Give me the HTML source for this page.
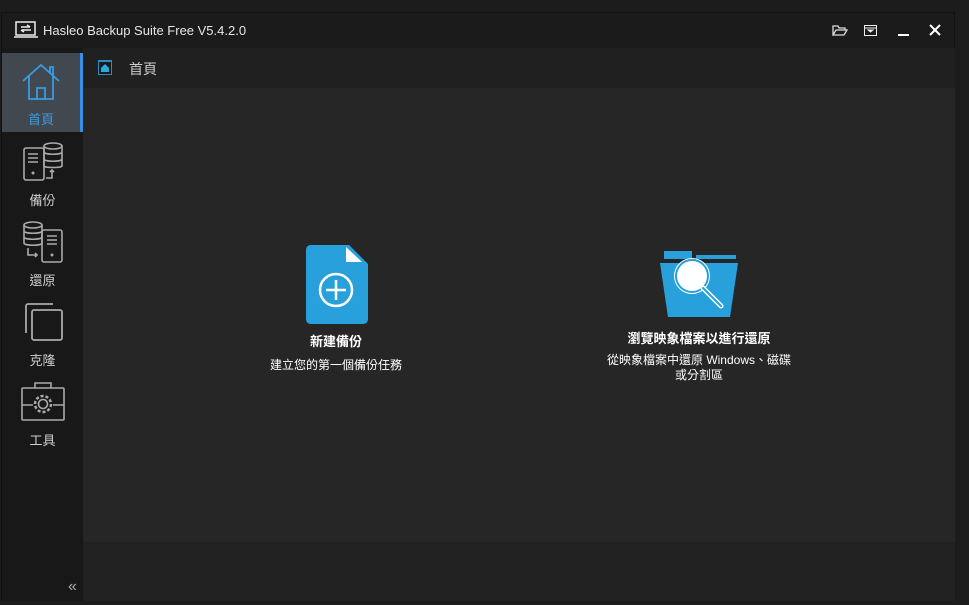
<!DOCTYPE html>
<html><head><meta charset="utf-8"><style>
*{margin:0;padding:0;box-sizing:border-box}
body{width:969px;height:605px;background:#1c1c1c;position:relative;overflow:hidden;font-family:"Liberation Sans","Noto Sans CJK TC",sans-serif;color:#ddd}
.win{position:absolute;left:1px;top:12px;width:954px;height:589px;background:#1a1a1a;border:1px solid #111}
.title{position:absolute;left:0;top:0;width:100%;height:35px;background:#1b1b1b}
.title .t{position:absolute;left:41px;top:10px;font-size:13px;color:#e6e6e6}
.side{position:absolute;left:0;top:35px;width:81px;height:553px;background:#181818}
.item{position:absolute;left:0;width:81px;text-align:center;font-size:13px;color:#d0d0d0}
.act{background:#424850;border-right:3px solid #3a8ee6;color:#3a9be0}
.crumb{position:absolute;left:81px;top:35px;width:872px;height:40px;background:#202020}
.content{position:absolute;left:81px;top:75px;width:872px;height:454px;background:#262626}
.bottom{position:absolute;left:81px;top:529px;width:872px;height:59px;background:#212121}
.cap{position:absolute;text-align:center;color:#fff;font-size:12px}
.cap b{display:block;font-size:13px;margin-bottom:6px}
</style></head><body>
<div class="win">
<div class="title">
<svg style="position:absolute;left:12px;top:8px" width="24" height="18" viewBox="0 0 24 18"><rect x="2" y="1" width="19" height="13" fill="none" stroke="#eee" stroke-width="1.5"/><path d="M0 16h24" stroke="#eee" stroke-width="1.5"/><path d="M7 6h9M13 4l3 2M17 9H8M10 11l-3-2" stroke="#eee" stroke-width="1.5" fill="none"/></svg>
<div class="t">Hasleo Backup Suite Free V5.4.2.0</div>
<svg style="position:absolute;left:830px;top:11px" width="16" height="13" viewBox="0 0 16 13"><path d="M1 11V2h5l1 2h6v2M1 11l3-5h11l-3 5z" fill="none" stroke="#ddd" stroke-width="1.3"/></svg>
<svg style="position:absolute;left:862px;top:12px" width="13" height="11" viewBox="0 0 13 11"><rect x="0.5" y="0.5" width="12" height="10" fill="none" stroke="#eee"/><path d="M0 3h13M4 5h5l-2.5 2z" stroke="#eee" fill="#eee"/></svg>
<div style="position:absolute;left:896px;top:21px;width:11px;height:2px;background:#fff"></div>
<svg style="position:absolute;left:927px;top:11px" width="12" height="12"><path d="M1 1l10 10M11 1L1 11" stroke="#fff" stroke-width="2"/></svg>
</div>
<div class="side">
<div class="item act" style="top:5px;height:79px">
<svg style="margin-top:9px" width="40" height="40" viewBox="0 0 40 40"><path d="M2 19L20 3l18 16M8 14v23h24V14M16 37V26h8v11M29 11V5h3v9" fill="none" stroke="#3a9be0" stroke-width="1.8"/></svg>
<div style="margin-top:4px">首頁</div></div>
<div class="item" style="top:93px;height:70px">
<svg width="42" height="42" viewBox="0 0 42 42"><rect x="2" y="7" width="20" height="32" rx="2" fill="none" stroke="#aaa" stroke-width="1.6"/><path d="M6 13h10M6 17h10M6 21h10" stroke="#aaa" stroke-width="1.6"/><circle cx="11" cy="32" r="1.5" fill="#aaa"/><ellipse cx="31" cy="5" rx="9" ry="3" fill="#181818" stroke="#aaa" stroke-width="1.6"/><path d="M22 5v20c0 2 18 2 18 0V5M22 11c0 3 18 3 18 0M22 18c0 3 18 3 18 0M24 37h6v-7M28 31l2-2 2 2" fill="none" stroke="#aaa" stroke-width="1.6"/></svg>
<div style="margin-top:4px">備份</div></div>
<div class="item" style="top:173px;height:70px">
<svg width="42" height="42" viewBox="0 0 42 42"><rect x="20" y="9" width="20" height="32" rx="2" fill="none" stroke="#aaa" stroke-width="1.6"/><path d="M25 15h10M25 19h10M25 23h10" stroke="#aaa" stroke-width="1.6"/><circle cx="30" cy="34" r="1.5" fill="#aaa"/><ellipse cx="11" cy="4" rx="9" ry="3" fill="none" stroke="#aaa" stroke-width="1.6"/><path d="M2 4v18c0 3 18 3 18 0V4M2 10c0 3 18 3 18 0M2 16c0 3 18 3 18 0M6 27v7h9M13 32l2 2-2 2" fill="none" stroke="#aaa" stroke-width="1.6"/></svg>
<div style="margin-top:4px">還原</div></div>
<div class="item" style="top:253px;height:70px">
<svg width="42" height="42" viewBox="0 0 42 42"><path d="M4 32V5c0-1 1-2 2-2h25" fill="none" stroke="#aaa" stroke-width="1.8"/><rect x="10" y="9" width="30" height="30" rx="2" fill="none" stroke="#aaa" stroke-width="1.8"/></svg>
<div style="margin-top:4px">克隆</div></div>
<div class="item" style="top:333px;height:70px">
<svg width="44" height="42" viewBox="0 0 44 42"><rect x="1" y="7" width="42" height="32" rx="1" fill="none" stroke="#aaa" stroke-width="1.6"/><path d="M14 7V2h16v5M1 24h11M32 24h11" fill="none" stroke="#aaa" stroke-width="1.6"/><circle cx="22" cy="23" r="8" fill="none" stroke="#aaa" stroke-width="2.5" stroke-dasharray="3 2"/><circle cx="22" cy="23" r="4.5" fill="none" stroke="#aaa" stroke-width="1.6"/></svg>
<div style="margin-top:4px">工具</div></div>
<div style="position:absolute;left:66px;top:530px;font-size:16px;color:#aaa">«</div>
</div>
<div class="crumb">
<svg style="position:absolute;left:15px;top:12px" width="14" height="15"><rect x="0.5" y="0.5" width="13" height="14" fill="#1a1a1a" stroke="#2a8fc0"/><rect x="0" y="0" width="14" height="2" fill="#2a8fc0"/><path d="M3 8l4-4 4 4v4H3z" fill="#2aa8e0"/></svg>
<div style="position:absolute;left:46px;top:11px;font-size:14px;color:#ccc">首頁</div>
</div>
<div class="content">
<svg style="position:absolute;left:223px;top:157px" width="63" height="79" viewBox="0 0 63 79"><path d="M5 0h38l19 19v55c0 3-2 5-5 5H5c-3 0-5-2-5-5V5c0-3 2-5 5-5z" fill="#27a0dc"/><path d="M40 2v15h16z" fill="#fff"/><circle cx="30" cy="45" r="16" fill="none" stroke="#fff" stroke-width="2.5"/><path d="M30 35v20M20 45h20" stroke="#fff" stroke-width="2.5"/></svg>
<div class="cap" style="left:148px;top:243px;width:210px"><b>新建備份</b>建立您的第一個備份任務</div>
<svg style="position:absolute;left:577px;top:163px" width="78" height="66" viewBox="0 0 78 66"><path d="M4 0h28v8H4z" fill="#27a0dc"/><path d="M36 4h40v4H36z" fill="#27a0dc"/><path d="M0 12h78l-8 54H8z" fill="#27a0dc"/><circle cx="32" cy="25" r="16" fill="#fff" stroke="#27a0dc" stroke-width="2"/><circle cx="32" cy="25" r="17.5" fill="none" stroke="#fff" stroke-width="1"/><path d="M43 37l18 18" stroke="#fff" stroke-width="5" stroke-linecap="round"/><path d="M43 37l18 18" stroke="#27a0dc" stroke-width="2" stroke-linecap="round"/></svg>
<div class="cap" style="left:486px;top:243px;width:260px;line-height:15px"><b style="margin-bottom:7px">瀏覽映象檔案以進行還原</b>從映象檔案中還原 Windows、磁碟<br>或分割區</div>
</div>
<div class="bottom"></div>
</div>
</body></html>
